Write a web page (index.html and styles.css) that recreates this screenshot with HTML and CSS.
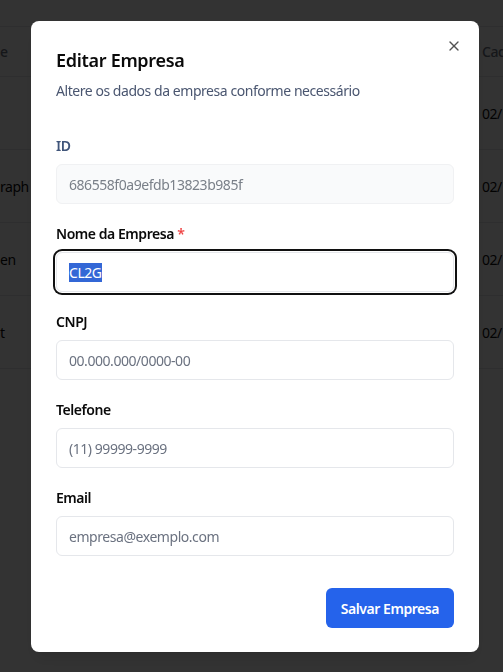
FILE: index.html
```html
<!DOCTYPE html>
<html lang="pt-BR">
<head>
<meta charset="utf-8">
<title>Editar Empresa</title>
<link rel="stylesheet" href="styles.css">
</head>
<body>
<main class="page">
  <div class="table">
    <div class="row head">
      <div class="cell name">e</div>
      <div class="cell mid"></div>
      <div class="cell date">Cad</div>
    </div>
    <div class="row">
      <div class="cell name"></div>
      <div class="cell mid"></div>
      <div class="cell date">02/</div>
    </div>
    <div class="row">
      <div class="cell name">raph</div>
      <div class="cell mid"></div>
      <div class="cell date">02/</div>
    </div>
    <div class="row">
      <div class="cell name">en</div>
      <div class="cell mid"></div>
      <div class="cell date">02/</div>
    </div>
    <div class="row">
      <div class="cell name">t</div>
      <div class="cell mid"></div>
      <div class="cell date">02/</div>
    </div>
  </div>
</main>
<div class="overlay"></div>
<div class="dialog" role="dialog" aria-labelledby="dlg-title">
  <button class="close" type="button" aria-label="Fechar">
    <svg viewBox="0 0 24 24" width="16" height="16" fill="none" stroke="currentColor" stroke-width="2" stroke-linecap="round" stroke-linejoin="round"><path d="M18 6 6 18"/><path d="m6 6 12 12"/></svg>
  </button>
  <header class="dialog-header">
    <h2 id="dlg-title" class="dialog-title">Editar Empresa</h2>
    <p class="dialog-desc">Altere os dados da empresa conforme necessário</p>
  </header>
  <form class="form">
    <div class="field">
      <label class="label label-muted" for="f-id">ID</label>
      <input class="input input-disabled" id="f-id" value="686558f0a9efdb13823b985f" disabled>
    </div>
    <div class="field">
      <label class="label" for="f-nome">Nome da Empresa <span class="req">*</span></label>
      <input class="input input-focus" id="f-nome" value="CL2G">
    </div>
    <div class="field">
      <label class="label" for="f-cnpj">CNPJ</label>
      <input class="input" id="f-cnpj" placeholder="00.000.000/0000-00">
    </div>
    <div class="field">
      <label class="label" for="f-tel">Telefone</label>
      <input class="input" id="f-tel" placeholder="(11) 99999-9999">
    </div>
    <div class="field">
      <label class="label" for="f-email">Email</label>
      <input class="input" id="f-email" placeholder="empresa@exemplo.com">
    </div>
    <div class="actions">
      <button class="btn-primary" type="button">Salvar Empresa</button>
    </div>
  </form>
</div>
<script src="app.js"></script>
</body>
</html>
```

FILE: styles.css
```css
* { box-sizing: border-box; }
html, body { margin: 0; padding: 0; }
body {
  font-family: "Noto Sans", "Open Sans", sans-serif;
  background: #ffffff;
  color: #0a0a0a;
  width: 503px;
  height: 672px;
  overflow: hidden;
  letter-spacing: -0.45px;
}
.page { padding-top: 26px; }
.table { border-top: 1px solid #e5e7eb; }
.row {
  display: grid;
  grid-template-columns: 40px 442px 21px;
  height: 73px;
  border-bottom: 1px solid #e5e7eb;
  align-items: center;
  font-size: 14px;
}
.row.head { height: 50px; color: #6b7280; font-weight: 500; }
.cell { white-space: nowrap; overflow: hidden; }
.overlay {
  position: fixed;
  inset: 0;
  background: rgba(0, 0, 0, 0.8);
}
.dialog {
  position: fixed;
  left: 31px;
  top: 21px;
  width: 448px;
  padding: 24px 25px;
  background: #ffffff;
  border-radius: 8px;
  box-shadow: 0 10px 15px -3px rgba(0,0,0,.1), 0 4px 6px -4px rgba(0,0,0,.1);
}
.close {
  position: absolute;
  top: 17px;
  right: 17px;
  width: 16px;
  height: 16px;
  padding: 0;
  border: 0;
  background: none;
  color: #0a0a0a;
  opacity: .7;
  display: flex;
}
.dialog-header { padding-top: 1px; }
.dialog-title {
  margin: 0;
  font-size: 18px;
  line-height: 28px;
  font-weight: 600;
  color: #0a0a0a;
  letter-spacing: -0.3px;
}
.dialog-desc {
  margin: 7px 0 0;
  font-size: 14px;
  line-height: 20px;
  color: #4a5670;
}
.form {
  margin-top: 35px;
  display: flex;
  flex-direction: column;
  gap: 20px;
}
.field { display: flex; flex-direction: column; gap: 8px; }
.label {
  font-size: 14px;
  line-height: 20px;
  font-weight: 600;
  color: #0a0a0a;
}
.label-muted { color: #40557a; }
.req { color: #ef4444; }
.input {
  height: 40px;
  width: 100%;
  border: 1px solid #e5e7eb;
  border-radius: 6px;
  padding: 0 12px;
  font: inherit;
  font-size: 14px;
  letter-spacing: -0.45px;
  color: #0a0a0a;
  background: #ffffff;
  outline: none;
}
.input::placeholder { color: #6b7280; }
.input-disabled { background: #f9fafb; color: #7a8089; border-color: #f0f1f3; }
.input-focus { box-shadow: 0 0 0 1px #ffffff, 0 0 0 3px #101010; }
.input::selection { background: #3367d6; color: #ffffff; }
.actions {
  display: flex;
  justify-content: flex-end;
  margin-top: 12px;
}
.btn-primary {
  height: 40px;
  padding: 0 15px;
  border: 0;
  border-radius: 6px;
  background: #2563eb;
  color: #ffffff;
  font: inherit;
  font-size: 14px;
  font-weight: 600;
  letter-spacing: -0.45px;
}
```

FILE: app.js
```js
var el = document.getElementById('f-nome');
el.focus();
el.select();
```
